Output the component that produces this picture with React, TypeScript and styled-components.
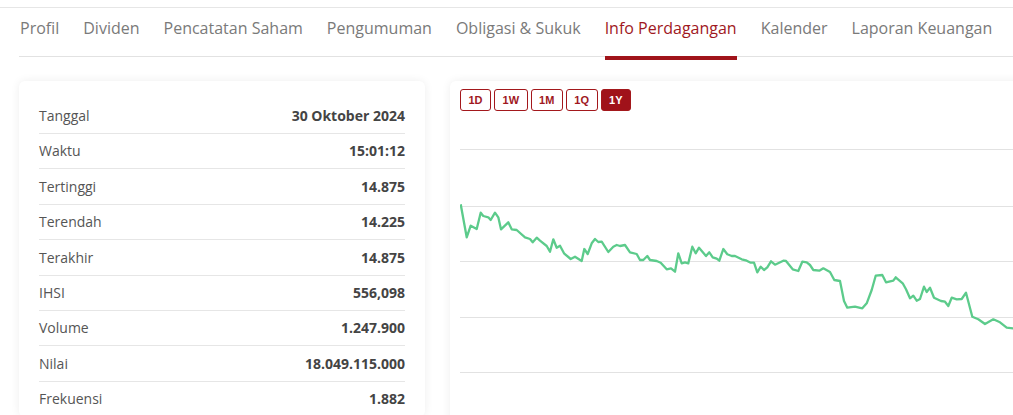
import { FC } from "react";
import styled, { createGlobalStyle } from "styled-components";

const GlobalStyle = createGlobalStyle`
  body {
    margin: 0;
    background: #fff;
    overflow: hidden;
    font-family: "Open Sans", "Noto Sans", sans-serif;
  }
`;

const tabs = [
  "Profil",
  "Dividen",
  "Pencatatan Saham",
  "Pengumuman",
  "Obligasi & Sukuk",
  "Info Perdagangan",
  "Kalender",
  "Laporan Keuangan",
];

const rows: [string, string][] = [
  ["Tanggal", "30 Oktober 2024"],
  ["Waktu", "15:01:12"],
  ["Tertinggi", "14.875"],
  ["Terendah", "14.225"],
  ["Terakhir", "14.875"],
  ["IHSI", "556,098"],
  ["Volume", "1.247.900"],
  ["Nilai", "18.049.115.000"],
  ["Frekuensi", "1.882"],
];

const ranges = ["1D", "1W", "1M", "1Q", "1Y"];

// price line, page coordinates (viewBox matches the page)
const points = [
  [460.7, 204.3], [466.7, 237.3], [470.7, 225.7], [476.7, 229], [480.7, 212.7],
  [483.3, 216], [488.3, 217.3], [490.7, 220], [495, 212.7], [498.3, 217.3],
  [501, 229.3], [508.3, 222.3], [511.7, 229.3], [516.7, 230], [525, 237.3],
  [530, 239], [532.7, 242.3], [536.7, 237.7], [540, 240.7], [546.7, 246],
  [550, 251.7], [553.3, 239.3], [556.7, 247.7], [560, 245.7], [564, 253.3],
  [570.7, 259], [575, 256.7], [581.7, 261], [584.3, 249], [587.7, 254],
  [591.7, 243.3], [595, 239], [598.3, 242], [601.7, 241.7], [608.3, 252],
  [613.3, 246.7], [616.7, 245], [620, 246], [625, 245], [630, 252.3],
  [636.7, 254], [640, 260], [643.3, 260], [647.3, 256], [650, 260],
  [656.7, 261], [660.7, 262.7], [666.7, 269.3], [671, 268.3], [675, 271.7],
  [678.3, 253.3], [681.7, 263.3], [685, 262.3], [688.3, 263.3], [692.3, 246.7],
  [695.7, 253.3], [699, 247.7], [706, 256], [709.3, 252.3], [712.7, 257.3],
  [716.7, 258.7], [719.3, 260.7], [723.3, 249], [727.3, 254.3], [731.7, 256],
  [735, 256], [741.7, 259.3], [746.7, 260.7], [750.7, 262.7], [754, 262.7],
  [757.3, 272.3], [760.7, 266.7], [764, 270], [767.3, 267.3], [771, 261.3],
  [775, 264.7], [783.3, 260.7], [786, 261], [792.7, 269.3], [798.3, 271],
  [802.3, 261.7], [806.7, 262.3], [810, 265], [813.3, 270], [819.3, 270.7],
  [823.3, 268.3], [830, 272], [834.3, 280], [840, 281], [844, 301],
  [847.3, 307.7], [855, 306.7], [862.3, 308.3], [866.7, 303.3], [871.7, 290],
  [875.7, 275.7], [882.3, 275], [886, 282.3], [893.3, 280.7], [895.7, 277.3],
  [902.7, 283.3], [906, 289.3], [910, 298.3], [913.3, 295.7], [916.7, 300.7],
  [920, 299], [924, 286.7], [926.7, 292], [930, 287.7], [934, 297.7],
  [941, 301], [945, 301.7], [948.3, 306], [951.7, 297.7], [956.7, 299.3],
  [961.7, 299], [966, 292.7], [972.3, 316.7], [978.3, 319.3], [985, 324],
  [993.3, 319.3], [1000, 322.3], [1006.7, 327.7], [1013, 328.3], [1020, 328.3],
];

const gridY = [149, 206, 261, 317, 372];

const Chart: FC = () => (
  <ChartSvg viewBox="460 119 600 296" width={600} height={296}>
    {gridY.map((y) => (
      <line key={y} x1={460} x2={1060} y1={y + 0.5} y2={y + 0.5} stroke="#e2e2e2" strokeWidth={1} />
    ))}
    <polyline
      points={points.map((p) => p.join(",")).join(" ")}
      fill="none"
      stroke="#5ccb8b"
      strokeWidth={2.3}
      strokeLinejoin="round"
    />
  </ChartSvg>
);

export default function App() {
  return (
    <>
      <GlobalStyle />
      <Page>
        <Nav>
          {tabs.map((t) => (
            <Tab key={t} active={t === "Info Perdagangan"}>
              {t}
            </Tab>
          ))}
        </Nav>
        <Content>
          <InfoCard>
            {rows.map(([label, value]) => (
              <Row key={label}>
                <Label>{label}</Label>
                <Value>{value}</Value>
              </Row>
            ))}
          </InfoCard>
          <ChartCard>
            <Ranges>
              {ranges.map((r) => (
                <RangeButton key={r} active={r === "1Y"}>
                  {r}
                </RangeButton>
              ))}
            </Ranges>
            <Chart />
          </ChartCard>
        </Content>
      </Page>
    </>
  );
}

const Page = styled.div`
  margin-top: 7px;
  border-top: 1px solid #e6e6e6;
  padding-left: 19px;
  width: 1100px;
`;

const Nav = styled.div`
  display: flex;
  gap: 24px;
  border-bottom: 1px solid #e2e2e2;
  height: 48px;
  padding-left: 1px;
`;

const Tab = styled.div<{ active?: boolean }>`
  font-size: 16px;
  line-height: 24px;
  padding-top: 8px;
  height: 40px;
  color: ${(p) => (p.active ? "#a0181e" : "#7a7a7a")};
  border-bottom: 4px solid ${(p) => (p.active ? "#a0141a" : "transparent")};
  white-space: nowrap;
`;

const Content = styled.div`
  display: flex;
  gap: 25px;
  margin-top: 24px;
  align-items: flex-start;
`;

const InfoCard = styled.div`
  width: 366px;
  padding: 17.5px 20px 0;
  background: #fff;
  border-radius: 6px;
  box-shadow: 0 0 10px rgba(0, 0, 0, 0.07);
`;

const Row = styled.div`
  display: flex;
  justify-content: space-between;
  align-items: center;
  padding: 7.5px 0;
  line-height: 19.4px;
  font-size: 14px;
  border-bottom: 1px solid #e6e6e6;
`;

const Label = styled.span`
  color: #555;
`;

const Value = styled.span`
  color: #444;
  font-weight: 700;
`;

const ChartCard = styled.div`
  width: 640px;
  height: 360px;
  padding: 8px 10px;
  background: #fff;
  border-radius: 6px;
  box-shadow: 0 0 10px rgba(0, 0, 0, 0.07);
`;

const Ranges = styled.div`
  display: flex;
  gap: 3px;
`;

const RangeButton = styled.button<{ active?: boolean }>`
  height: 22px;
  padding: 0 7.5px;
  border-radius: 3px;
  border: 1px solid #a3181c;
  background: ${(p) => (p.active ? "#a0121a" : "#fff")};
  color: ${(p) => (p.active ? "#fff" : "#a0181e")};
  font-family: "Liberation Sans", Arial, sans-serif;
  font-weight: 700;
  font-size: 11px;
  cursor: pointer;
`;

const ChartSvg = styled.svg`
  display: block;
  margin-top: 8px;
`;
